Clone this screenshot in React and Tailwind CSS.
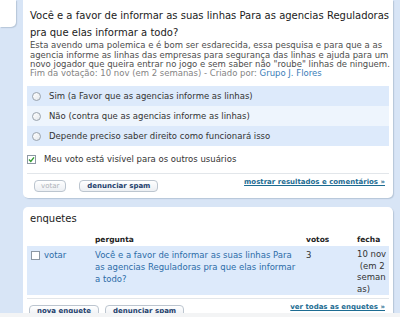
function Radio() {
  return (
    <span className="w-[9px] h-[9px] rounded-full border border-[#9aa3ad] bg-gradient-to-br from-white to-[#e4e8ec] shrink-0" />
  );
}

function Btn({ children, disabled }) {
  return (
    <span
      className={
        "h-[12px] flex items-center rounded-[4px] border border-[#bcc5cf] bg-gradient-to-b from-white to-[#eceff3] text-[7px] leading-[10px] " +
        (disabled ? "px-[6px] text-[#aeb3b8]" : "px-[7px] font-bold text-[#23406c]")
      }
    >
      {children}
    </span>
  );
}

export default function App() {
  const options = [
    { label: "Sim (a Favor que as agencias informe as linhas)", bg: "bg-[#ddeafb]" },
    { label: "Não (contra que as agencias informe as linhas)", bg: "bg-[#eef5fd]" },
    { label: "Depende preciso saber direito como funcionará isso", bg: "bg-[#ddeafb]" },
  ];

  return (
    <div className="relative w-[400px] h-[317px] overflow-hidden bg-[#d8e5f6] flex font-['DejaVu_Sans',sans-serif]">
      {/* left column, mostly out of view */}
      <div className="w-[16px] shrink-0">
        <div className="h-[27px] bg-white rounded-br-[5px] shadow-[1px_1px_1px_rgba(120,140,160,0.35)]" />
      </div>

      <div className="ml-[7px] w-[370px] flex flex-col gap-[9px]">
        {/* poll panel */}
        <div className="bg-white rounded-b-[5px] px-[4px] pt-[7px] pb-[6px] shadow-[1px_1px_1px_rgba(120,140,160,0.35)]">
          <div className="px-[3px] whitespace-nowrap">
            <div className="text-[10px] leading-[17px] text-[#1b1b1b]">
              <div>Você e a favor de informar as suas linhas Para as agencias Reguladoras</div>
              <div>pra que elas informar a todo?</div>
            </div>
            <div className="text-[8.5px] leading-[9.5px] text-[#4d4d4d]">
              <div>Esta avendo uma polemica e é bom ser esdarecida, essa pesquisa e para que a as</div>
              <div>agencia informe as linhas das empresas para segurança das linhas e ajuda para um</div>
              <div>novo jogador que queira entrar no jogo e sem saber não "roube" linhas de ninguem.</div>
            </div>
            <div className="-mt-[1px] text-[8.5px] leading-[9.5px] text-[#848484]">
              Fim da votação: 10 nov (em 2 semanas) - Criado por:{" "}
              <span className="text-[#3a7db8]">Grupo J. Flores</span>
            </div>
          </div>

          <div className="mt-[8px] flex flex-col">
            {options.map((o) => (
              <div key={o.label} className={"h-[20px] flex items-center gap-[8px] pl-[5px] " + o.bg}>
                <Radio />
                <span className="text-[8.5px] text-[#333] whitespace-nowrap">{o.label}</span>
              </div>
            ))}
          </div>

          <div className="mt-[8px] h-[10px] flex items-center gap-[8px]">
            <span className="w-[9px] h-[9px] border border-[#8d98a4] bg-white flex items-center justify-center shrink-0">
              <svg width="7" height="7" viewBox="0 0 7 7">
                <path d="M1 3.6 L2.8 5.4 L6 1.4" fill="none" stroke="#2f9a2f" strokeWidth="1.4" />
              </svg>
            </span>
            <span className="text-[8.5px] text-[#333] whitespace-nowrap">Meu voto está visível para os outros usuários</span>
          </div>

          <div className="mt-[9px] border-t border-[#e2e6ea]" />

          <div className="mt-[6px] flex items-start">
            <div className="pl-[7px] flex gap-[13px]">
              <Btn disabled>votar</Btn>
              <Btn>denunciar spam</Btn>
            </div>
            <span className="ml-auto mr-[4px] text-[7px] leading-[4px] font-bold text-[#1d6c92] underline whitespace-nowrap">
              mostrar resultados e comentários »
            </span>
          </div>
        </div>

        {/* poll list panel */}
        <div className="flex-1 bg-white rounded-t-[5px] px-[4px] pt-[5px] shadow-[1px_1px_1px_rgba(120,140,160,0.35)]">
          <div className="px-[3px] text-[10px] leading-[13px] text-[#1b1b1b]">enquetes</div>

          <div className="mt-[10px] grid grid-cols-[68px_211px_51px_1fr] text-[7.5px] leading-[10px] font-bold text-[#222]">
            <div />
            <div>pergunta</div>
            <div>votos</div>
            <div>fecha</div>
          </div>

          <div className="mt-[1px] pt-[3px] grid grid-cols-[68px_211px_51px_1fr] bg-[#ddeafb] text-[8.5px] whitespace-nowrap">
            <div className="pl-[4px] flex items-start gap-[4px] leading-[12px]">
              <span className="mt-[2px] w-[9px] h-[9px] border border-[#8d98a4] bg-white shrink-0" />
              <span className="text-[#2c6ca8]">votar</span>
            </div>
            <div className="leading-[12px] text-[#2c6ca8]">
              <div>Você e a favor de informar as suas linhas Para</div>
              <div>as agencias Reguladoras pra que elas informar</div>
              <div>a todo?</div>
            </div>
            <div className="leading-[12px] text-[#333]">3</div>
            <div className="leading-[11.5px] text-[#333]">
              <div>10 nov</div>
              <div>&nbsp;(em 2</div>
              <div>seman</div>
              <div>as)</div>
            </div>
          </div>

          <div className="mt-[3px] border-t border-[#e2e6ea]" />

          <div className="mt-[6px] flex items-start">
            <div className="pl-[2px] flex gap-[6px]">
              <Btn>nova enquete</Btn>
              <Btn>denunciar spam</Btn>
            </div>
            <span className="ml-auto mr-[4px] text-[7px] leading-[4px] font-bold text-[#1d6c92] underline whitespace-nowrap">
              ver todas as enquetes »
            </span>
          </div>
        </div>
      </div>

      <div className="absolute left-0 right-0 bottom-0 h-[4px] bg-[#f3f4f5]" />
    </div>
  );
}
